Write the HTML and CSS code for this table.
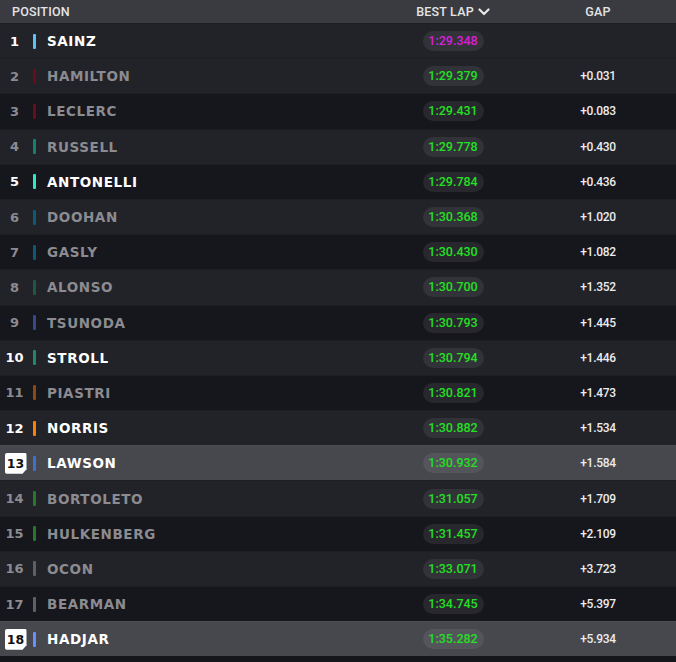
FILE: index.html
```html
<!DOCTYPE html>
<html>
<head>
<meta charset="utf-8">
<link rel="stylesheet" href="styles.css">
</head>
<body>
<div class="board">
  <div class="head">
    <div class="h-pos">POSITION</div>
    <div class="h-lap">BEST LAP <svg class="chev" width="12" height="8" viewBox="0 0 12 8"><polyline points="1.5,1.5 6,6 10.5,1.5" fill="none" stroke="#e6e6e6" stroke-width="2.2" stroke-linecap="round" stroke-linejoin="round"/></svg></div>
    <div class="h-gap">GAP</div>
  </div>
  <div class="row top on"><div class="pos">1</div><span class="bar" style="background:#5ec0f8"></span><div class="name">SAINZ</div><div class="lap"><span class="pill purple">1:29.348</span></div><div class="gap"></div></div>
  <div class="row lite"><div class="pos">2</div><span class="bar" style="background:#6b0d18"></span><div class="name">HAMILTON</div><div class="lap"><span class="pill">1:29.379</span></div><div class="gap">+0.031</div></div>
  <div class="row"><div class="pos">3</div><span class="bar" style="background:#6b0d18"></span><div class="name">LECLERC</div><div class="lap"><span class="pill">1:29.431</span></div><div class="gap">+0.083</div></div>
  <div class="row lite"><div class="pos">4</div><span class="bar" style="background:#16806e"></span><div class="name">RUSSELL</div><div class="lap"><span class="pill">1:29.778</span></div><div class="gap">+0.430</div></div>
  <div class="row on"><div class="pos">5</div><span class="bar" style="background:#2be8c9"></span><div class="name">ANTONELLI</div><div class="lap"><span class="pill">1:29.784</span></div><div class="gap">+0.436</div></div>
  <div class="row lite"><div class="pos">6</div><span class="bar" style="background:#0b5a78"></span><div class="name">DOOHAN</div><div class="lap"><span class="pill">1:30.368</span></div><div class="gap">+1.020</div></div>
  <div class="row"><div class="pos">7</div><span class="bar" style="background:#0b5a78"></span><div class="name">GASLY</div><div class="lap"><span class="pill">1:30.430</span></div><div class="gap">+1.082</div></div>
  <div class="row lite"><div class="pos">8</div><span class="bar" style="background:#1d5845"></span><div class="name">ALONSO</div><div class="lap"><span class="pill">1:30.700</span></div><div class="gap">+1.352</div></div>
  <div class="row"><div class="pos">9</div><span class="bar" style="background:#34478f"></span><div class="name">TSUNODA</div><div class="lap"><span class="pill">1:30.793</span></div><div class="gap">+1.445</div></div>
  <div class="row lite on"><div class="pos">10</div><span class="bar" style="background:#1f8a66"></span><div class="name">STROLL</div><div class="lap"><span class="pill">1:30.794</span></div><div class="gap">+1.446</div></div>
  <div class="row"><div class="pos">11</div><span class="bar" style="background:#8a4a12"></span><div class="name">PIASTRI</div><div class="lap"><span class="pill">1:30.821</span></div><div class="gap">+1.473</div></div>
  <div class="row lite on"><div class="pos">12</div><span class="bar" style="background:#ff8000"></span><div class="name">NORRIS</div><div class="lap"><span class="pill">1:30.882</span></div><div class="gap">+1.534</div></div>
  <div class="row sel on"><div class="pos"><span class="box">13</span></div><span class="bar" style="background:#3d70d0"></span><div class="name">LAWSON</div><div class="lap"><span class="pill">1:30.932</span></div><div class="gap">+1.584</div></div>
  <div class="row lite"><div class="pos">14</div><span class="bar" style="background:#237a2a"></span><div class="name">BORTOLETO</div><div class="lap"><span class="pill">1:31.057</span></div><div class="gap">+1.709</div></div>
  <div class="row"><div class="pos">15</div><span class="bar" style="background:#237a2a"></span><div class="name">HULKENBERG</div><div class="lap"><span class="pill">1:31.457</span></div><div class="gap">+2.109</div></div>
  <div class="row lite"><div class="pos">16</div><span class="bar" style="background:#5f6064"></span><div class="name">OCON</div><div class="lap"><span class="pill">1:33.071</span></div><div class="gap">+3.723</div></div>
  <div class="row"><div class="pos">17</div><span class="bar" style="background:#5f6064"></span><div class="name">BEARMAN</div><div class="lap"><span class="pill">1:34.745</span></div><div class="gap">+5.397</div></div>
  <div class="row sel on"><div class="pos"><span class="box">18</span></div><span class="bar" style="background:#6690ff"></span><div class="name">HADJAR</div><div class="lap"><span class="pill">1:35.282</span></div><div class="gap">+5.934</div></div>
</div>
</body>
</html>
```
FILE: styles.css
```css
html, body {
  margin: 0;
  padding: 0;
  background: #15151c;
}
.board {
  width: 676px;
  display: flex;
  flex-direction: column;
}
.head {
  height: 23px;
  background: #3a3b40;
  display: grid;
  grid-template-columns: 393px 120px 25px 120px 18px;
  align-items: center;
  font-family: Roboto, "Liberation Sans", sans-serif;
  font-size: 12.5px;
  font-weight: 500;
  letter-spacing: 0.2px;
  color: #e4e4e6;
}
.h-pos {
  grid-column: 1;
  padding-left: 12px;
}
.h-lap {
  grid-column: 2;
  display: flex;
  align-items: center;
  justify-content: center;
  gap: 4px;
}
.h-gap {
  grid-column: 4;
  text-align: center;
}
.chev {
  margin-top: 1px;
}
.row {
  height: 35.2px;
  box-sizing: border-box;
  display: grid;
  grid-template-columns: 28px 5px 3px 11px 346px 120px 25px 120px 18px;
  align-items: center;
  background: #16161d;
  border-top: 1px solid #1d1d24;
}
.row.lite, .row.top {
  background: #222329;
}
.row.sel {
  background: #47484e;
  border-top-color: #4d4e54;
}
.pos {
  grid-column: 1;
  text-align: center;
  font-family: "DejaVu Sans", sans-serif;
  font-weight: bold;
  font-size: 13px;
  color: #8b8b90;
  padding-left: 1px;
}
.bar {
  grid-column: 3;
  width: 3px;
  height: 15px;
  border-radius: 1px;
}
.name {
  grid-column: 5;
  font-family: "DejaVu Sans", sans-serif;
  font-weight: bold;
  font-size: 13.5px;
  letter-spacing: 0.6px;
  color: #8b8b90;
}
.row.on .pos, .row.on .name {
  color: #ffffff;
}
.box {
  display: inline-block;
  width: 22px;
  height: 21px;
  line-height: 21px;
  background: #ffffff;
  color: #111111;
  font-size: 12.5px;
  border-radius: 2px;
  clip-path: polygon(0 0, 100% 0, 100% 78%, 82% 100%, 0 100%);
  margin-left: 2px;
}
.lap {
  grid-column: 6;
  text-align: center;
}
.pill {
  display: inline-block;
  width: 61px;
  height: 20px;
  line-height: 20px;
  border-radius: 10px;
  background: rgba(255, 255, 255, 0.075);
  font-family: Roboto, "Liberation Sans", sans-serif;
  font-size: 12.5px;
  font-weight: 500;
  color: #22e022;
  text-align: center;
}
.pill.purple {
  color: #d81fdc;
}
.gap {
  grid-column: 8;
  text-align: center;
  font-family: Roboto, "Liberation Sans", sans-serif;
  font-size: 12px;
  font-weight: 500;
  letter-spacing: -0.3px;
  color: #ececee;
}
```
